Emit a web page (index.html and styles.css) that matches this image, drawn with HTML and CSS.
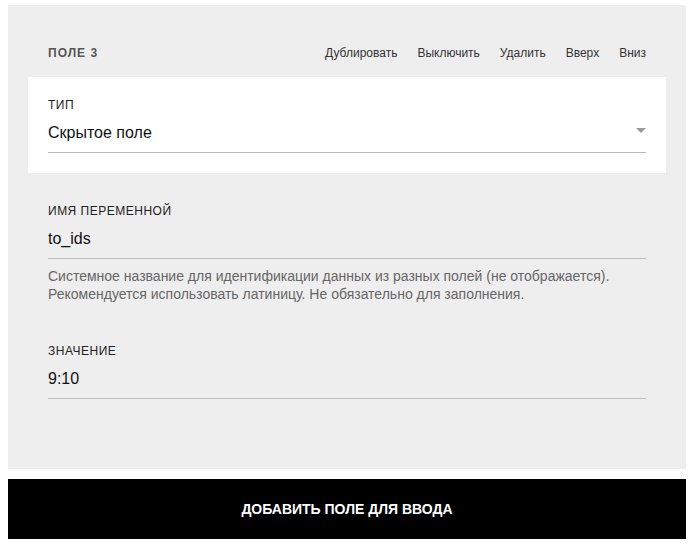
FILE: index.html
```html
<!DOCTYPE html>
<html lang="ru">
<head>
    <meta charset="UTF-8">
    <meta name="viewport" content="width=device-width, initial-scale=1.0">
    <title>Поле 3</title>
    <link rel="stylesheet" href="styles.css">
</head>
<body>
    <div class="field-panel">
        <div class="panel-head">
            <span class="panel-title">Поле 3</span>
            <div class="panel-actions">
                <a href="#">Дублировать</a>
                <a href="#">Выключить</a>
                <a href="#">Удалить</a>
                <a href="#">Вверх</a>
                <a href="#">Вниз</a>
            </div>
        </div>

        <div class="form-row type-row">
            <label class="row-label">Тип</label>
            <div class="select-box">
                <span>Скрытое поле</span>
                <span class="arrow"></span>
            </div>
        </div>

        <div class="form-row name-row">
            <label class="row-label">Имя переменной</label>
            <div class="text-box">to_ids</div>
            <p class="hint">Системное название для идентификации данных из разных полей (не отображается).<br>Рекомендуется использовать латиницу. Не обязательно для заполнения.</p>
        </div>

        <div class="form-row value-row">
            <label class="row-label">Значение</label>
            <div class="text-box">9:10</div>
        </div>
    </div>

    <button class="add-btn">Добавить поле для ввода</button>
</body>
</html>
```

FILE: styles.css
```css
body {
    font-family: "Liberation Sans", Arial, sans-serif;
    background-color: #fff;
    color: #222;
    margin: 5px 8px 0;
    padding: 0;
}

.field-panel {
    background-color: #eee;
    height: 464px;
    padding: 0 20px;
    box-sizing: border-box;
}

.panel-head {
    display: flex;
    align-items: center;
    justify-content: space-between;
    padding: 40px 20px 0;
    height: 16px;
    margin-bottom: 16px;
    box-sizing: content-box;
}

.panel-title {
    font-size: 12px;
    font-weight: bold;
    text-transform: uppercase;
    letter-spacing: 1px;
    color: #555;
}

.panel-actions {
    display: flex;
    gap: 20px;
}

.panel-actions a {
    font-size: 12px;
    color: #333;
    text-decoration: none;
}

.form-row {
    padding: 0 20px;
}

.type-row {
    background-color: #fff;
    padding-top: 20px;
    padding-bottom: 20px;
}

.name-row {
    padding-top: 30px;
}

.value-row {
    padding-top: 40px;
}

.row-label {
    display: block;
    font-size: 12px;
    line-height: 16px;
    text-transform: uppercase;
    letter-spacing: 0.5px;
    color: #222;
}

.select-box,
.text-box {
    display: flex;
    align-items: center;
    justify-content: space-between;
    height: 38px;
    margin-top: 1px;
    font-size: 16px;
    color: #111;
    border-bottom: 1px solid #bbb;
    box-sizing: content-box;
}

.arrow {
    width: 0;
    height: 0;
    border-left: 5px solid transparent;
    border-right: 5px solid transparent;
    border-top: 5px solid #999;
    margin-bottom: 6px;
}

.hint {
    margin: 8px 0 0;
    font-size: 14px;
    line-height: 18px;
    color: #666;
}

.add-btn {
    display: block;
    width: 100%;
    height: 60px;
    margin-top: 10px;
    background-color: #000;
    color: #fff;
    border: none;
    font-family: "Liberation Sans", Arial, sans-serif;
    font-size: 14px;
    font-weight: bold;
    text-transform: uppercase;
    cursor: pointer;
}
```
